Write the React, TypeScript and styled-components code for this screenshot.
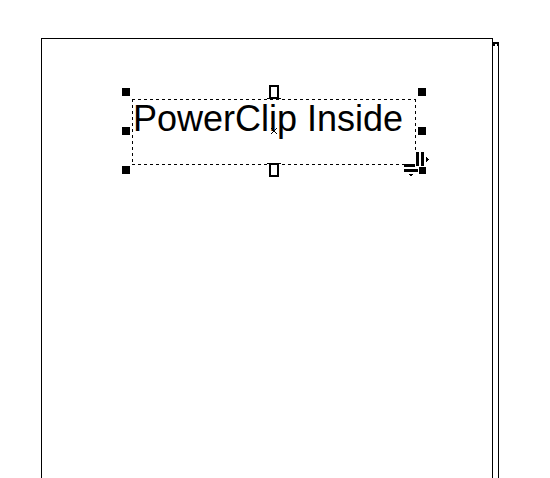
import React from "react";
import styled, { createGlobalStyle } from "styled-components";

const GlobalStyle = createGlobalStyle`
  * { box-sizing: border-box; }
  body { margin: 0; background: #fff; color: #000; }
`;

const Workspace = styled.main`
  display: flex;
  min-height: 100vh;
  padding: 38px 51px 0 41px;
`;

const Sheet = styled.section`
  flex: 1;
  padding: 60px 76px 0 90px;
  border: 1px solid #000;
  border-bottom: 0;
`;

const SheetShadow = styled.div`
  width: 6px;
  margin-top: 4px;
  border-top: 2px solid #000;
  border-right: 1px solid #000;

  &::before {
    content: "";
    display: block;
    height: 2px;
    border: solid #000;
    border-width: 0 1px 0 2px;
  }
`;

const TextFrame = styled.div`
  position: relative;
  min-height: 66px;
  background:
    repeating-linear-gradient(90deg, #000 0 3px, #fff 3px 6px) top / 100% 1px no-repeat,
    repeating-linear-gradient(90deg, #000 0 3px, #fff 3px 6px) bottom / 100% 1px no-repeat,
    repeating-linear-gradient(180deg, #000 0 3px, #fff 3px 6px) left / 1px 100% no-repeat,
    repeating-linear-gradient(180deg, #000 0 3px, #fff 3px 6px) right / 1px 100% no-repeat;
`;

const FrameText = styled.h1`
  margin: 0;
  padding-left: 1px;
  font: 400 36px/40px "Liberation Sans", Arial, sans-serif;
  white-space: nowrap;
`;

const Handles = styled.div`
  position: absolute;
  inset: -11px -10px -9px;
  display: grid;
  grid-template-columns: auto auto;
  justify-content: space-between;
  align-content: space-between;
`;

const SizeHandle = styled.button`
  width: 8px;
  height: 8px;
  padding: 0;
  border: 0;
  background: #000;
`;

const FlowTabs = styled.div`
  position: absolute;
  inset: -14px 0 -12px;
  display: flex;
  flex-direction: column;
  align-items: center;
  justify-content: space-between;
`;

const FlowTab = styled.button<{ $flipped?: boolean }>`
  width: 14px;
  height: 14px;
  padding: 0;
  border: 0;
  background: none;

  svg {
    display: block;
    transform: ${({ $flipped }) => ($flipped ? "scaleY(-1)" : "none")};
  }
`;

const SpacingHandle = styled.button`
  position: absolute;
  right: -14px;
  bottom: -13px;
  width: 26px;
  height: 26px;
  padding: 0;
  border: 0;
  background: none;

  svg { display: block; }
`;

const handleNames = [
  "top left",
  "top right",
  "middle left",
  "middle right",
  "bottom left",
  "bottom right",
];

const TabShape = () => (
  <svg width="14" height="14" viewBox="0 0 14 14" shapeRendering="crispEdges">
    <path d="M2 0h10v14H2z" />
    <path d="M4 2h6v10H4z" fill="#fff" />
    <path d="M0 13h14v1H0z" />
  </svg>
);

export default function App() {
  return (
    <>
      <GlobalStyle />
      <Workspace>
        <Sheet aria-label="Page">
          <TextFrame>
            <FrameText>PowerClip Inside</FrameText>
            <Handles>
              {handleNames.map((name) => (
                <SizeHandle key={name} type="button" aria-label={`Resize ${name}`} />
              ))}
            </Handles>
            <FlowTabs>
              <FlowTab type="button" aria-label="Link frame above">
                <TabShape />
              </FlowTab>
              <svg width="6" height="6" viewBox="0 0 6 6" stroke="#000" aria-hidden="true">
                <path d="M0 0l6 6M6 0l-6 6" />
              </svg>
              <FlowTab type="button" $flipped aria-label="Link frame below">
                <TabShape />
              </FlowTab>
            </FlowTabs>
            <SpacingHandle type="button" aria-label="Adjust text spacing">
              <svg width="26" height="26" viewBox="0 0 26 26" shapeRendering="crispEdges">
                <path d="M0 11h11V0h15v22H14v4H0z" fill="#fff" />
                <path d="M12 0h3v14h-3zM17 0h3v14h-3zM22 5h1v1h1v1h1v1h-1v1h-1v1h-1zM0 12h11v3H0zM0 17h14v3H0zM5 22h4v1H8v1H6v-1H5zM15 15h7v7h-7z" />
              </svg>
            </SpacingHandle>
          </TextFrame>
        </Sheet>
        <SheetShadow />
      </Workspace>
    </>
  );
}
